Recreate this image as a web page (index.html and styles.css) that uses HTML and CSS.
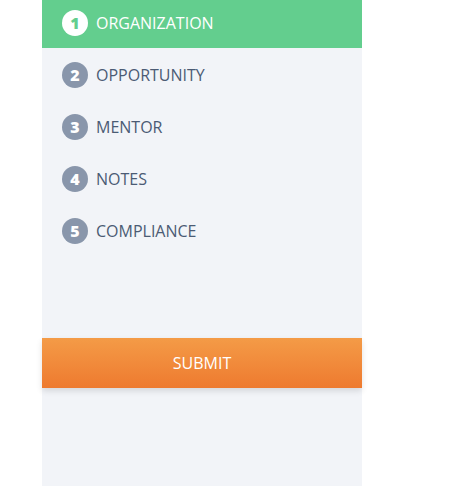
FILE: index.html
```html
<!DOCTYPE html>
<html lang="en">
<head>
    <meta charset="UTF-8">
    <meta name="viewport" content="width=device-width, initial-scale=1.0">
    <title>Application Steps</title>
    <link rel="stylesheet" href="styles.css">
</head>
<body>
    <div class="sidebar">
        <ul class="steps">
            <li class="step active"><span class="step-num">1</span>ORGANIZATION</li>
            <li class="step"><span class="step-num">2</span>OPPORTUNITY</li>
            <li class="step"><span class="step-num">3</span>MENTOR</li>
            <li class="step"><span class="step-num">4</span>NOTES</li>
            <li class="step"><span class="step-num">5</span>COMPLIANCE</li>
        </ul>
        <button type="button" class="submit-button">SUBMIT</button>
    </div>
</body>
</html>
```

FILE: styles.css
```css
body {
    font-family: 'Open Sans', sans-serif;
    margin: 0;
    padding: 0;
    background: #ffffff;
    overflow: hidden;
}
.sidebar {
    margin-left: 42px;
    width: 320px;
    height: 486px;
    background: #f2f4f8;
    display: flex;
    flex-direction: column;
}
.steps {
    list-style: none;
    margin: -4px 0 0 0;
    padding: 0;
}
.step {
    display: flex;
    align-items: center;
    box-sizing: border-box;
    height: 52px;
    padding: 2px 0 0 20px;
    font-size: 16px;
    color: #4b5b74;
}
.step.active {
    background: #63ce8e;
    color: #ffffff;
}
.step-num {
    width: 26px;
    height: 26px;
    border-radius: 50%;
    background: #8996ab;
    color: #ffffff;
    font-weight: 800;
    font-size: 16px;
    display: flex;
    align-items: center;
    justify-content: center;
    margin-right: 8px;
}
.step.active .step-num {
    background: #ffffff;
    color: #63ce8e;
}
.submit-button {
    margin-top: 82px;
    height: 50px;
    width: 320px;
    border: none;
    font-family: 'Open Sans', sans-serif;
    font-size: 16px;
    color: #ffffff;
    background: linear-gradient(#f49b47, #ee7a2f);
    box-shadow: 0 3px 6px rgba(0, 0, 0, 0.12);
    cursor: pointer;
}
```
